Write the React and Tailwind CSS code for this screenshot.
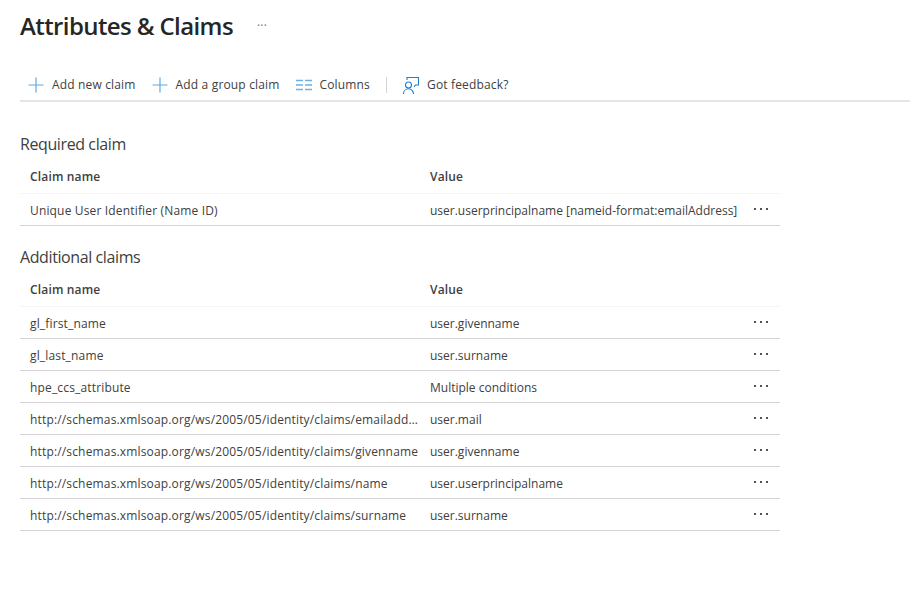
const FONT = { fontFamily: '"Open Sans", "Noto Sans", sans-serif' };

const ADDITIONAL = [
  ["gl_first_name", "user.givenname"],
  ["gl_last_name", "user.surname"],
  ["hpe_ccs_attribute", "Multiple conditions"],
  ["http://schemas.xmlsoap.org/ws/2005/05/identity/claims/emailaddress", "user.mail"],
  ["http://schemas.xmlsoap.org/ws/2005/05/identity/claims/givenname", "user.givenname"],
  ["http://schemas.xmlsoap.org/ws/2005/05/identity/claims/name", "user.userprincipalname"],
  ["http://schemas.xmlsoap.org/ws/2005/05/identity/claims/surname", "user.surname"],
];

function PlusIcon() {
  return (
    <svg width="16" height="16" viewBox="0 0 16 16" fill="none" stroke="#5ea9e6" strokeWidth="1.2">
      <path d="M0.500 8h15M8 0.500v15" />
    </svg>
  );
}

function ColumnsIcon() {
  return (
    <svg width="16" height="12" viewBox="0 0 16 12" fill="none" stroke="#6cb0e6" strokeWidth="1.6">
      <path d="M0 1.500h7M9 1.500h7M0 6h7M9 6h7M0 10.500h7M9 10.500h7" />
    </svg>
  );
}

function FeedbackIcon() {
  return (
    <svg width="16" height="17" viewBox="0 0 16 17" fill="none" stroke="#1b7fd4" strokeWidth="1.1">
      <path d="M4 3V0.500h11.500v7.500h-3l-1.500 1.800" />
      <circle cx="5.500" cy="8" r="3" />
      <path d="M0.500 17c0-3 2.200-5.200 5-5.200s5 2.200 5 5.200" />
    </svg>
  );
}

function ToolbarButton({ icon, label }) {
  return (
    <button className="flex items-center gap-2 text-xs text-neutral-700">
      {icon}
      {label}
    </button>
  );
}

function Dots() {
  return (
    <div className="flex gap-1 pb-1 pl-0.5">
      <span className="size-0.5 bg-neutral-600" />
      <span className="size-0.5 bg-neutral-600" />
      <span className="size-0.5 bg-neutral-600" />
    </div>
  );
}

function Row({ name, value }) {
  return (
    <div className="flex h-8 items-center border-b border-neutral-300 pt-0.5 text-xs text-neutral-700">
      <div className="w-100 truncate pl-2.5">{name}</div>
      <div className="flex-1 truncate pl-2.5 tracking-normal">{value}</div>
      <div className="w-7">
        <Dots />
      </div>
    </div>
  );
}

function ClaimTable({ title, rows }) {
  return (
    <section className="w-190 pb-px">
      <h2 className="text-base leading-5 tracking-tight text-neutral-700">{title}</h2>
      <div className="mt-1 flex h-9 items-center border-b border-neutral-100 pt-0.5 text-xs font-semibold text-neutral-700">
        <div className="w-100 pl-2.5">Claim name</div>
        <div className="pl-2.5">Value</div>
      </div>
      {rows.map(([name, value]) => (
        <Row key={name} name={name} value={value} />
      ))}
    </section>
  );
}

export default function App() {
  return (
    <div className="h-[614px] w-[910px] overflow-hidden bg-white tracking-[0.01em]" style={FONT}>
      <div className="flex items-center gap-6 pl-5 pt-2.5">
        <h1 className="text-2xl font-semibold tracking-tight text-neutral-800">Attributes &amp; Claims</h1>
        <span className="text-xs text-neutral-500">···</span>
      </div>
      <div className="ml-5 mt-6 flex h-9 items-center gap-4 border-b-2 border-neutral-200 pl-2 pt-1">
        <ToolbarButton icon={<PlusIcon />} label="Add new claim" />
        <ToolbarButton icon={<PlusIcon />} label="Add a group claim" />
        <ToolbarButton icon={<ColumnsIcon />} label="Columns" />
        <div className="h-4 w-px bg-neutral-300" />
        <ToolbarButton icon={<FeedbackIcon />} label="Got feedback?" />
      </div>
      <div className="flex flex-col gap-5 pl-5 pt-8">
        <ClaimTable
          title="Required claim"
          rows={[["Unique User Identifier (Name ID)", "user.userprincipalname [nameid-format:emailAddress]"]]}
        />
        <ClaimTable title="Additional claims" rows={ADDITIONAL} />
      </div>
    </div>
  );
}
